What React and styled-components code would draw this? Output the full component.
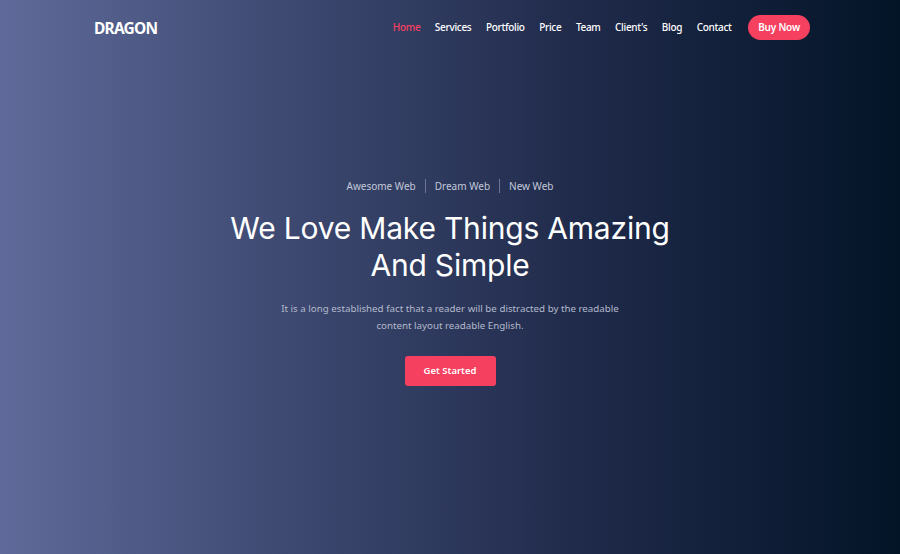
import React from 'react';
import styled, { createGlobalStyle } from 'styled-components';

const GlobalStyle = createGlobalStyle`
  * { box-sizing: border-box; }
  body {
    margin: 0;
    font-family: "Noto Sans", "Open Sans", sans-serif;
  }
`;

const Hero = styled.section`
  height: 554px;
  background: linear-gradient(to right, #5f6a9a 0%, #3a466d 35%, #1f2a4a 65%, #031427 100%);
  display: flex;
  flex-direction: column;
`;

const Navbar = styled.header`
  display: flex;
  align-items: flex-start;
  justify-content: space-between;
  padding: 15px 90px 0 94px;
  height: 55px;
`;

const Logo = styled.a`
  color: #fff;
  font-weight: 700;
  font-size: 15.5px;
  letter-spacing: -0.8px;
  line-height: 27px;
  text-decoration: none;
`;

const Menu = styled.nav`
  display: flex;
  align-items: center;
`;

const MenuItem = styled.a`
  color: ${(p) => (p.active ? '#f6405f' : '#ffffff')};
  font-size: 10px;
  font-weight: 500;
  letter-spacing: -0.3px;
  line-height: 25px;
  margin-right: 14.5px;
  text-decoration: none;
`;

const BuyButton = styled.a`
  margin-left: 2px;
  background: #f6405f;
  color: #fff;
  font-size: 10px;
  font-weight: 600;
  letter-spacing: -0.2px;
  height: 25px;
  line-height: 25px;
  padding: 0 10px;
  border-radius: 13px;
  text-decoration: none;
`;

const Content = styled.div`
  flex: 1;
  display: flex;
  flex-direction: column;
  align-items: center;
  text-align: center;
  padding-top: 124px;
`;

const Tags = styled.ul`
  display: flex;
  list-style: none;
  margin: 0;
  padding: 0;
  color: #c3c8d9;
  font-size: 10px;
  line-height: 14px;
`;

const Tag = styled.li`
  padding: 0 9px;
  &:not(:last-child) {
    border-right: 1px solid #6d7594;
  }
`;

const Title = styled.h1`
  margin: 17px 0 0;
  color: #fff;
  font-family: Inter, "Noto Sans", sans-serif;
  font-weight: 400;
  font-size: 30px;
  line-height: 37px;
  letter-spacing: -0.2px;
`;

const Lead = styled.p`
  margin: 16px 0 0;
  color: #b3b9cc;
  font-size: 9.75px;
  line-height: 17px;
  max-width: 360px;
`;

const StartButton = styled.a`
  margin-top: 22px;
  background: #f6405f;
  color: #fff;
  font-size: 9.5px;
  font-weight: 600;
  width: 91px;
  height: 30px;
  line-height: 30px;
  border-radius: 3px;
  text-decoration: none;
`;

const links = ['Home', 'Services', 'Portfolio', 'Price', 'Team', "Client's", 'Blog', 'Contact'];

export default function App() {
  return (
    <>
      <GlobalStyle />
      <Hero>
        <Navbar>
          <Logo href="#">DRAGON</Logo>
          <Menu>
            {links.map((l, i) => (
              <MenuItem key={l} href="#" active={i === 0 ? 1 : 0}>
                {l}
              </MenuItem>
            ))}
            <BuyButton href="#">Buy Now</BuyButton>
          </Menu>
        </Navbar>
        <Content>
          <Tags>
            <Tag>Awesome Web</Tag>
            <Tag>Dream Web</Tag>
            <Tag>New Web</Tag>
          </Tags>
          <Title>
            We Love Make Things Amazing
            <br />
            And Simple
          </Title>
          <Lead>
            It is a long established fact that a reader will be distracted by the readable content
            layout readable English.
          </Lead>
          <StartButton href="#">Get Started</StartButton>
        </Content>
      </Hero>
    </>
  );
}
